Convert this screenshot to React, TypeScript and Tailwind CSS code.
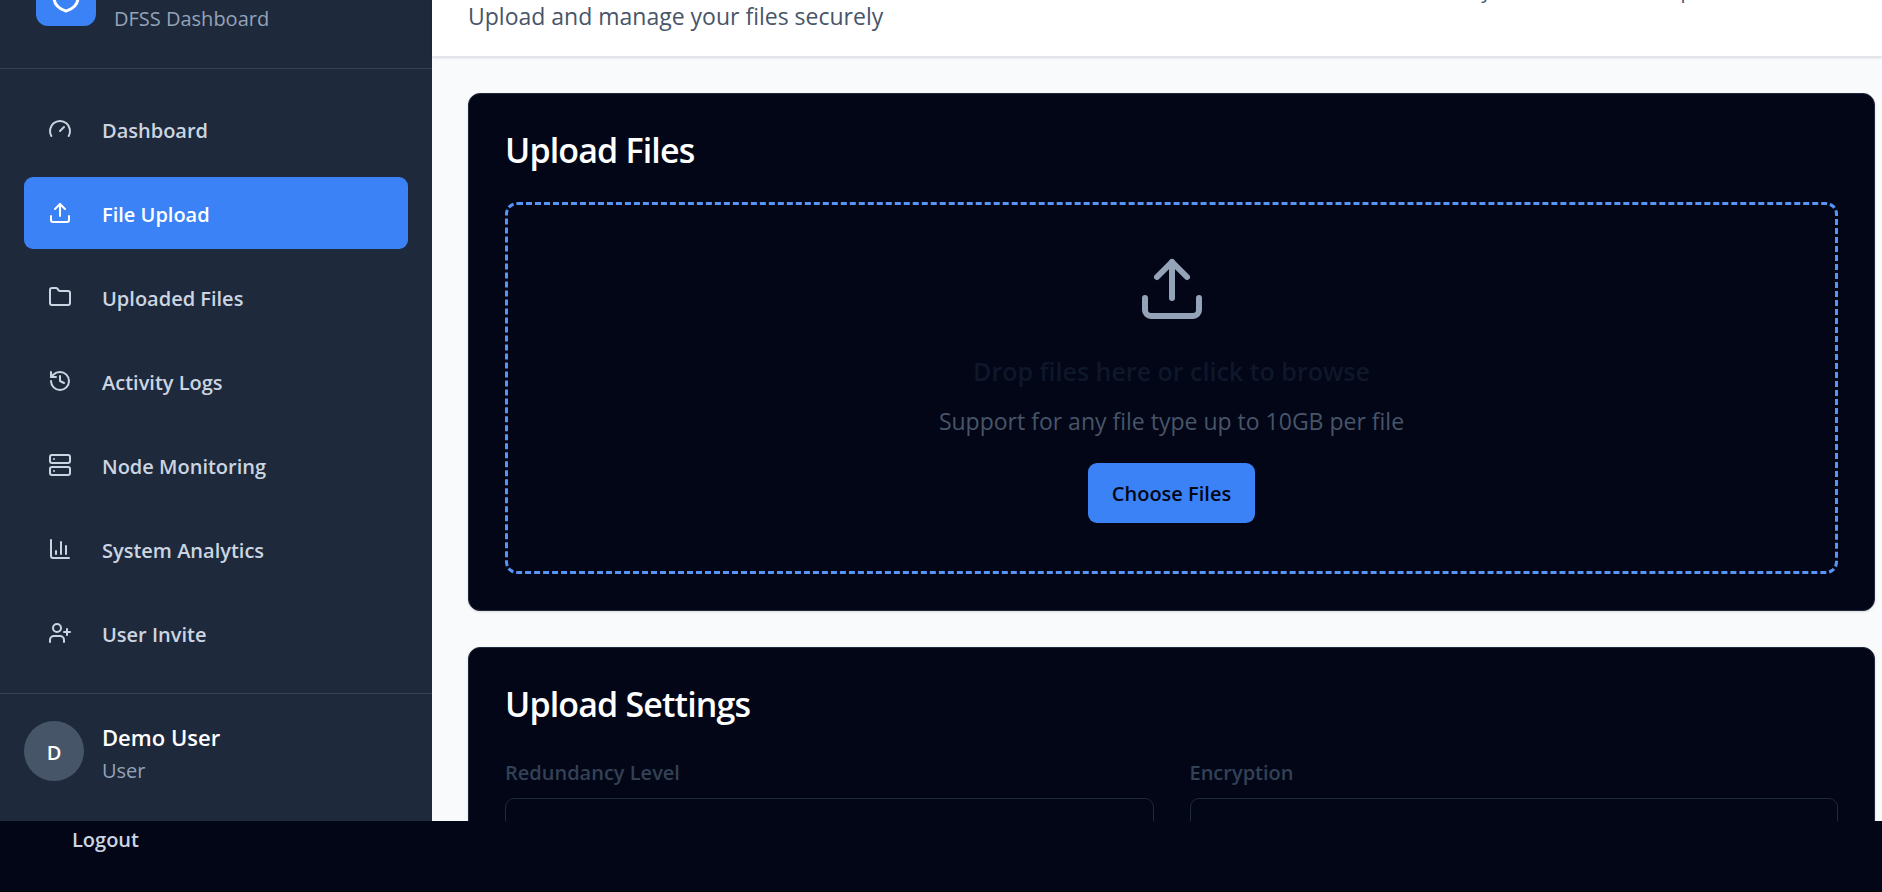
import { Folder, History, Server, Shield, Upload, UserPlus } from "lucide-react";
import type { ReactNode } from "react";

function GaugeIcon() {
  return (
    <svg viewBox="0 0 24 24" className="size-6" fill="none" stroke="currentColor" strokeWidth="2" strokeLinecap="round" strokeLinejoin="round" aria-hidden="true">
      <path d="m12 14 4-4" />
      <path d="M3.34 19a10 10 0 1 1 17.32 0" />
    </svg>
  );
}

function ChartIcon() {
  return (
    <svg viewBox="0 0 24 24" className="size-6" fill="none" stroke="currentColor" strokeWidth="2" strokeLinecap="round" strokeLinejoin="round" aria-hidden="true">
      <path d="M3 3v16a2 2 0 0 0 2 2h16" />
      <path d="M18 17V9" />
      <path d="M13 17V5" />
      <path d="M8 17v-3" />
    </svg>
  );
}

const items: { label: string; icon: ReactNode; active?: boolean }[] = [
  { label: "Dashboard", icon: <GaugeIcon /> },
  { label: "File Upload", icon: <Upload className="size-6" />, active: true },
  { label: "Uploaded Files", icon: <Folder className="size-6" /> },
  { label: "Activity Logs", icon: <History className="size-6" /> },
  { label: "Node Monitoring", icon: <Server className="size-6" /> },
  { label: "System Analytics", icon: <ChartIcon /> },
  { label: "User Invite", icon: <UserPlus className="size-6" /> },
];

function Sidebar() {
  return (
    <aside className="flex w-[432px] shrink-0 flex-col bg-[#1e293b]">
      <div className="flex h-[69px] items-end gap-[18px] overflow-hidden border-b border-[#334155] px-9 pb-[34px]">
        <div className="mb-2 flex size-[60px] shrink-0 items-center justify-center rounded-xl bg-[#3b82f6]">
          <Shield className="size-9 text-white" />
        </div>
        <p className="text-[20px] leading-[30px] text-[#94a3b8]">DFSS Dashboard</p>
      </div>
      <nav className="flex flex-col gap-3 p-6">
        {items.map((item) => (
          <a
            key={item.label}
            href="#"
            className={
              item.active
                ? "flex h-[72px] items-center gap-[30px] rounded-[9px] bg-[#3b82f6] px-6 text-[20px] font-semibold text-white"
                : "flex h-[72px] items-center gap-[30px] rounded-[9px] px-6 text-[20px] font-semibold text-[#cbd5e1]"
            }
          >
            {item.icon}
            <span className="pt-1">{item.label}</span>
          </a>
        ))}
      </nav>
      <div className="flex flex-1 items-start gap-[18px] border-t border-[#334155] px-6 pt-[27px]">
        <div className="flex size-[60px] items-center justify-center rounded-full bg-[#475569] pt-1 text-[20px] font-semibold text-white">D</div>
        <div>
          <p className="text-[22px] leading-[33px] font-semibold text-white">Demo User</p>
          <p className="text-[20px] leading-[33px] text-[#94a3b8]">User</p>
        </div>
      </div>
    </aside>
  );
}

function Card({ title, children }: { title: string; children: ReactNode }) {
  return (
    <section className="rounded-xl border border-[#1e293b] bg-[#020617] p-9 text-white shadow-sm">
      <h2 className="text-[34px] leading-[40px] font-semibold tracking-tight">{title}</h2>
      {children}
    </section>
  );
}

function Field({ id, label }: { id: string; label: string }) {
  return (
    <div className="flex flex-col gap-2.5">
      <label htmlFor={id} className="pt-0.5 text-[20px] leading-[30px] font-semibold text-[#334155]">{label}</label>
      <select id={id} className="h-[60px] w-full appearance-none rounded-[9px] border border-[#1e293b] bg-[#020617]" />
    </div>
  );
}

export default function App() {
  return (
    <div className="flex h-screen flex-col overflow-hidden bg-[#020617] font-['Open_Sans','Noto_Sans',sans-serif]">
      <div className="flex min-h-0 flex-1 overflow-hidden">
        <Sidebar />
        <div className="flex min-w-0 flex-1 flex-col bg-[#f8fafc]">
          <header className="flex h-[57px] shrink-0 items-end justify-between overflow-hidden border-b border-[#e2e8f0] bg-white pr-[106px] pb-[22px] pl-9 shadow-sm">
            <p className="text-[23px] leading-[36px] text-[#475569]">Upload and manage your files securely</p>
            <div className="mb-7 flex gap-16 text-[20px] leading-[30px] text-[#475569]">
              <span>System Status</span>
              <span>Operational</span>
            </div>
          </header>
          <main className="flex flex-col gap-9 py-9 pr-[7px] pl-9">
            <Card title="Upload Files">
              <div className="mt-8 flex flex-col items-center rounded-xl border-3 border-dashed border-[#5794f7] px-9 py-12">
                <Upload className="size-[72px] text-[#94a3b8]" />
                <p className="mt-[26px] text-[25px] leading-[40px] font-semibold text-[#0f172a]">Drop files here or click to browse</p>
                <p className="mt-3 text-[23px] leading-[36px] text-[#475569]">Support for any file type up to 10GB per file</p>
                <button type="button" className="mt-6 h-[60px] rounded-[9px] bg-[#3b82f6] px-6 pt-0.5 text-[20px] font-semibold text-[#020617]">Choose Files</button>
              </div>
            </Card>
            <Card title="Upload Settings">
              <div className="mt-8 grid grid-cols-2 gap-9">
                <Field id="redundancy" label="Redundancy Level" />
                <Field id="encryption" label="Encryption" />
              </div>
            </Card>
          </main>
        </div>
      </div>
      <footer className="h-[71px] shrink-0 border-b border-black px-[72px] pt-1">
        <button type="button" className="text-[20px] leading-[30px] font-semibold text-[#cbd5e1]">Logout</button>
      </footer>
    </div>
  );
}
